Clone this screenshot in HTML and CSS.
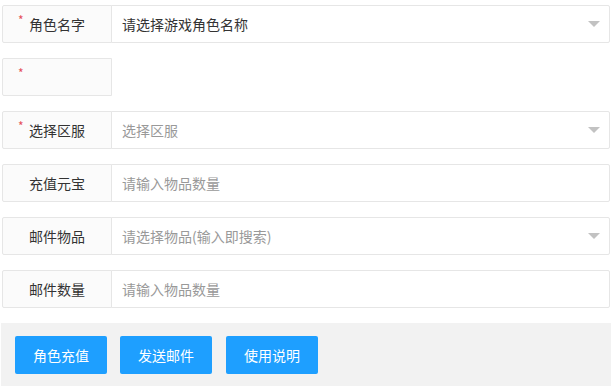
FILE: index.html
```html
<!DOCTYPE html>
<html lang="zh-CN">
<head>
<meta charset="utf-8">
<meta name="viewport" content="width=device-width, initial-scale=1">
<title>角色管理</title>
<link rel="stylesheet" href="styles.css">
</head>
<body>

<form class="form-pane">
  <div class="form-item">
    <label class="form-label required">角色名字</label>
    <div class="input-block select">
      <input type="text" class="form-input" value="请选择游戏角色名称" readonly>
      <i class="edge"></i>
    </div>
  </div>

  <div class="form-item">
    <label class="form-label required"></label>
  </div>

  <div class="form-item">
    <label class="form-label required">选择区服</label>
    <div class="input-block select">
      <input type="text" class="form-input" placeholder="选择区服" readonly>
      <i class="edge"></i>
    </div>
  </div>

  <div class="form-item">
    <label class="form-label">充值元宝</label>
    <div class="input-block">
      <input type="text" class="form-input" placeholder="请输入物品数量">
    </div>
  </div>

  <div class="form-item">
    <label class="form-label">邮件物品</label>
    <div class="input-block select">
      <input type="text" class="form-input" placeholder="请选择物品(输入即搜索)">
      <i class="edge"></i>
    </div>
  </div>

  <div class="form-item">
    <label class="form-label">邮件数量</label>
    <div class="input-block">
      <input type="text" class="form-input" placeholder="请输入物品数量">
    </div>
  </div>

  <div class="form-footer">
    <button type="button" class="btn">角色充值</button>
    <button type="button" class="btn">发送邮件</button>
    <button type="button" class="btn btn-last">使用说明</button>
  </div>
</form>

</body>
</html>
```

FILE: styles.css
```css
body {
  margin: 0;
  padding: 5px 2px 0 2px;
  font-family: "Noto Sans CJK SC", "Microsoft YaHei", sans-serif;
  font-size: 14px;
  color: #333;
  background: #fff;
}

.form-item {
  display: flex;
  height: 38px;
  margin-bottom: 15px;
}

.form-label {
  position: relative;
  width: 110px;
  height: 38px;
  flex: none;
  box-sizing: border-box;
  padding: 8px 15px;
  line-height: 20px;
  text-align: center;
  background-color: #fbfbfb;
  border: 1px solid #e6e6e6;
  border-radius: 2px 0 0 2px;
  color: #333;
}

.form-label.required:before {
  content: "*";
  position: absolute;
  left: 15px;
  top: 8px;
  font-size: 12px;
  line-height: 12px;
  color: #e5505a;
}

.input-block {
  position: relative;
  flex: 1;
  margin-left: -1px;
  margin-right: 1px;
}

.form-input {
  display: block;
  width: 100%;
  height: 38px;
  box-sizing: border-box;
  padding: 0 30px 0 10px;
  border: 1px solid #e6e6e6;
  border-radius: 0 2px 2px 0;
  background: #fff;
  font: inherit;
  color: #333;
  outline: none;
}

.form-input::placeholder {
  color: #999;
}

.edge {
  position: absolute;
  right: 10px;
  top: 50%;
  margin-top: -3px;
  width: 0;
  height: 0;
  border-width: 6px 6px 0 6px;
  border-style: solid;
  border-color: #c2c2c2 transparent transparent transparent;
}

.form-footer {
  display: flex;
  gap: 13px;
  height: 63px;
  box-sizing: border-box;
  margin-left: -1px;
  padding: 13px 14px 12px 14px;
  background-color: #f2f2f2;
}

.btn {
  height: 38px;
  padding: 0 18px;
  border: none;
  border-radius: 2px;
  background-color: #1e9fff;
  color: #fff;
  font: inherit;
  line-height: 38px;
  cursor: pointer;
}

.btn-last {
  margin-left: 1px;
}
```
